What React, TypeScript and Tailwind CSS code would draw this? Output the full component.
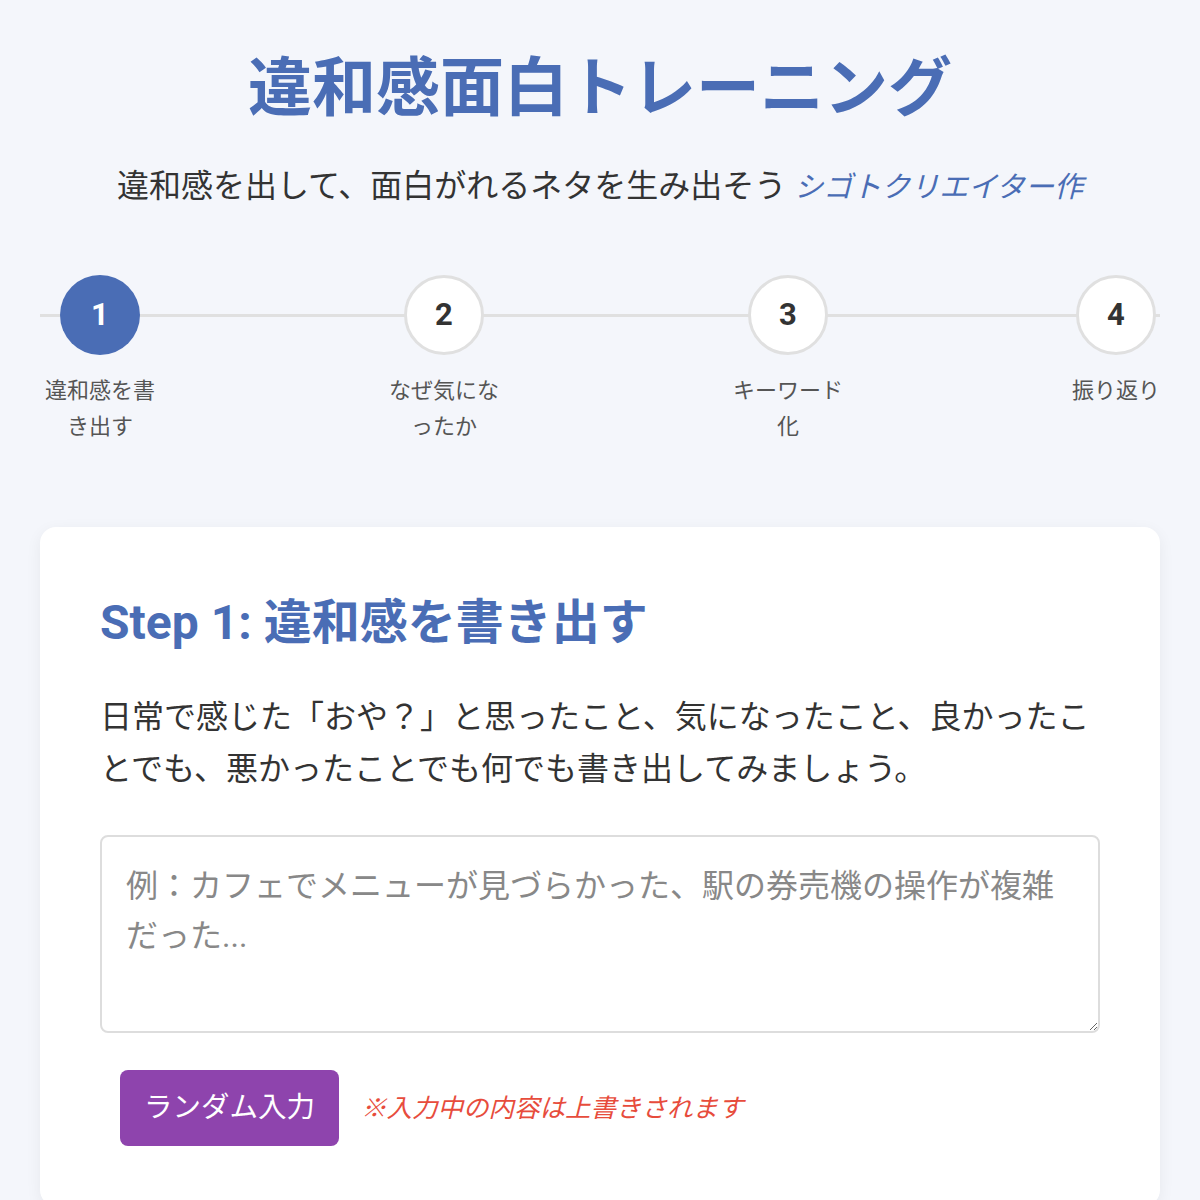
import React, { useState } from "react";

const steps = [
  { n: 1, label: "違和感を書き出す" },
  { n: 2, label: "なぜ気になったか" },
  { n: 3, label: "キーワード化" },
  { n: 4, label: "振り返り" },
];

const App = () => {
  const [text, setText] = useState<string>("");
  const current = 1;

  return (
    <div
      className="min-h-screen bg-[#f4f6fb] px-10 pt-[50px] pb-10"
      style={{ fontFamily: "Roboto, 'Noto Sans CJK JP', sans-serif" }}
    >
      <h1 className="text-center text-[64px] leading-[77px] font-bold text-[#4a6db5]">
        違和感面白トレーニング
      </h1>
      <p className="mt-[35px] text-center text-[32px] leading-[48px] text-[#333]">
        違和感を出して、面白がれるネタを生み出そう{" "}
        <a href="#" className="italic text-[29px] text-[#4a6db5]">
          シゴトクリエイター作
        </a>
      </p>

      <div className="relative mt-[64px] flex justify-between">
        <div className="absolute left-0 right-0 top-[39px] h-[3px] bg-[#e0e0e0]" />
        {steps.map((s) => (
          <div key={s.n} className="relative flex max-w-[120px] flex-col items-center">
            <div
              className={
                s.n === current
                  ? "flex h-20 w-20 items-center justify-center rounded-full bg-[#4a6db5] text-[31px] font-bold text-white"
                  : "flex h-20 w-20 items-center justify-center rounded-full border-[3px] border-[#e0e0e0] bg-white text-[31px] font-bold text-[#333]"
              }
            >
              {s.n}
            </div>
            <div className="mt-[18px] text-center text-[22px] leading-[36px] text-[#555]">
              {s.label}
            </div>
          </div>
        ))}
      </div>

      <div className="mt-[82px] rounded-2xl bg-white px-[60px] pt-[60px] pb-[60px] shadow-[0_4px_16px_rgba(0,0,0,0.06)]">
        <h2 className="text-[48px] leading-[72px] font-bold text-[#4a6db5]">
          Step 1: 違和感を書き出す
        </h2>
        <p className="mt-8 text-[32px] leading-[52px] text-[#333]">
          日常で感じた「おや？」と思ったこと、気になったこと、良かったことでも、悪かったことでも何でも書き出してみましょう。
        </p>
        <textarea
          value={text}
          onChange={(e) => setText(e.target.value)}
          placeholder="例：カフェでメニューが見づらかった、駅の券売機の操作が複雑だった..."
          className="mt-10 block h-[198px] w-full rounded-lg border-2 border-[#ddd] p-6 text-[32px] leading-[50px] text-[#333] placeholder:text-[#888] outline-none"
        />
        <div className="mt-[37px] flex items-center gap-[22px] px-5">
          <button
            onClick={() => setText("駅の券売機の操作が複雑だった")}
            className="h-[76px] rounded-lg bg-[#8e44ad] px-6 text-[28.5px] text-white"
          >
            ランダム入力
          </button>
          <span className="text-[25.5px] italic text-[#e74c3c]">※入力中の内容は上書きされます</span>
        </div>
      </div>
    </div>
  );
};

export default App;
